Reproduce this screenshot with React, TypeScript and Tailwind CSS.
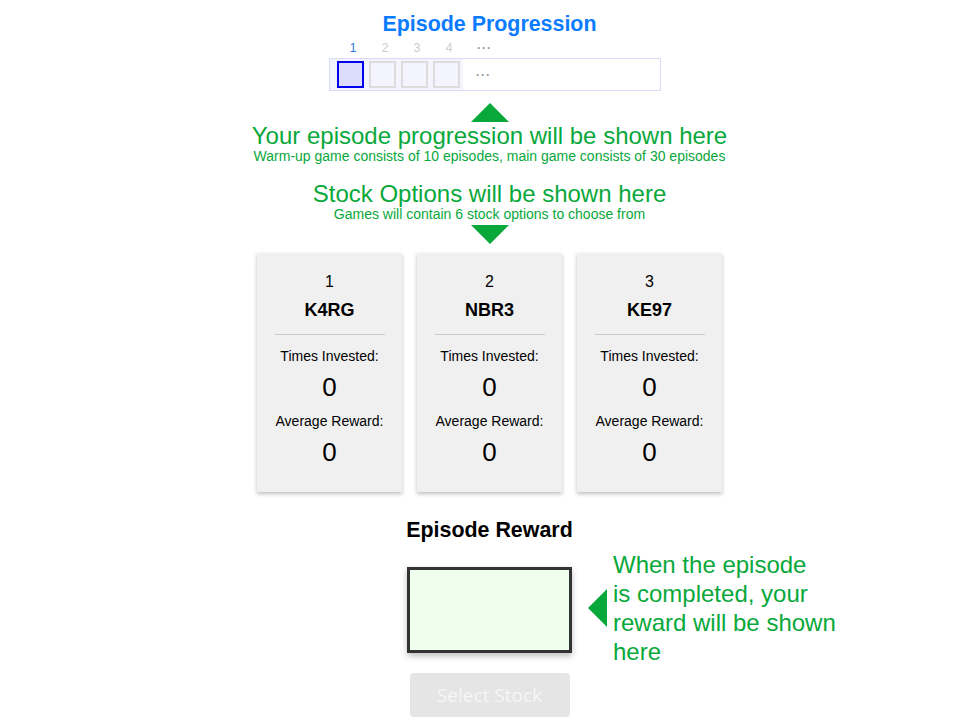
import React from 'react';

const stocks = [
  { id: 1, name: 'K4RG', invested: 0, reward: 0 },
  { id: 2, name: 'NBR3', invested: 0, reward: 0 },
  { id: 3, name: 'KE97', invested: 0, reward: 0 },
];

function TriangleUp() {
  return (
    <svg width="38" height="19" viewBox="0 0 38 19" className="block">
      <polygon points="19,0 38,19 0,19" fill="#09a83b" />
    </svg>
  );
}

function TriangleDown() {
  return (
    <svg width="38" height="19" viewBox="0 0 38 19" className="block">
      <polygon points="0,0 38,0 19,19" fill="#09a83b" />
    </svg>
  );
}

function TriangleLeft() {
  return (
    <svg width="19" height="38" viewBox="0 0 19 38" className="block shrink-0">
      <polygon points="19,0 19,38 0,19" fill="#09a83b" />
    </svg>
  );
}

function StockCard({ stock }: { stock: (typeof stocks)[number] }) {
  return (
    <div className="w-[145px] h-[239px] bg-[#f0f0f0] shadow-[0_2px_4px_rgba(0,0,0,0.25)] flex flex-col items-center pt-[19px] text-black">
      <div className="text-[16px] leading-[20px]">{stock.id}</div>
      <div className="mt-[7px] text-[18px] leading-[22px] font-bold">{stock.name}</div>
      <div className="mt-[13px] w-[110px] h-px bg-[#cccccc]" />
      <div className="mt-[12px] text-[14px] leading-[18px]">Times Invested:</div>
      <div className="mt-[7px] text-[26px] leading-[30px]">{stock.invested}</div>
      <div className="mt-[10px] text-[14px] leading-[18px]">Average Reward:</div>
      <div className="mt-[7px] text-[26px] leading-[30px]">{stock.reward}</div>
    </div>
  );
}

export default function App() {
  const boxes = [1, 2, 3, 4];

  return (
    <div className="min-h-screen bg-white font-['Liberation_Sans',Arial,sans-serif] pl-[5px]">
      <div className="flex flex-col items-center pt-[12px]">
        {/* Episode progression */}
        <h1 className="text-[21.4px] leading-[24px] font-bold text-[#0b7bff]">Episode Progression</h1>

        <div className="ml-[11px] w-[332px] mt-[5px]">
          <div className="flex items-center h-[14px] pl-[8px] text-[12px] leading-[14px]">
            {boxes.map((n) => (
              <div
                key={n}
                className={`w-[32px] text-center ${n === 1 ? 'text-[#2a7ae2]' : 'text-[#cccccc]'}`}
              >
                {n}
              </div>
            ))}
            <div className="ml-[12px] text-[#999999] tracking-[1px] font-bold">···</div>
          </div>
          <div className="mt-[3px] h-[33px] border border-[#dadaf8] flex items-stretch">
            <div className="bg-[#f4f4ff] flex items-center gap-[5px] pl-[7px] pr-[3px]">
              {boxes.map((n) => (
                <div
                  key={n}
                  className={`w-[27px] h-[27px] border-2 ${
                    n === 1 ? 'border-[#0000ee] bg-[#dcdcff]' : 'border-[#dcdcdc] bg-[#f4f4ff]'
                  }`}
                />
              ))}
            </div>
            <div className="flex items-center ml-[13px] text-[12px] text-[#999999] tracking-[1px] font-bold">···</div>
          </div>
        </div>

        {/* Annotation: progression */}
        <div className="mt-[12px]">
          <TriangleUp />
        </div>
        <div className="text-[24px] leading-[27px] text-[#09a83b] whitespace-nowrap">
          Your episode progression will be shown here
        </div>
        <div className="text-[14px] leading-[15px] text-[#09a83b] whitespace-nowrap">
          Warm-up game consists of 10 episodes, main game consists of 30 episodes
        </div>

        {/* Annotation: stock options */}
        <div className="mt-[16px] text-[24px] leading-[27px] text-[#09a83b] whitespace-nowrap">
          Stock Options will be shown here
        </div>
        <div className="text-[14px] leading-[15px] text-[#09a83b] whitespace-nowrap">
          Games will contain 6 stock options to choose from
        </div>
        <div className="mt-[3px]">
          <TriangleDown />
        </div>

        {/* Stock cards */}
        <div className="mt-[9px] flex gap-[15px]">
          {stocks.map((s) => (
            <StockCard key={s.id} stock={s} />
          ))}
        </div>

        {/* Episode reward */}
        <h2 className="mt-[26px] text-[21.4px] leading-[24px] font-bold text-black">Episode Reward</h2>
        <div className="relative mt-[25px] w-[165px] h-[86px] border-[3px] border-[#333333] bg-[#eeffee] shadow-[0_3px_6px_rgba(0,0,0,0.25)]">
          <div className="absolute left-[178px] top-[-20px] h-[116px] flex items-center gap-[6px]">
            <TriangleLeft />
            <div className="text-[24px] leading-[29px] text-[#09a83b] whitespace-nowrap">
              When the episode
              <br />
              is completed, your
              <br />
              reward will be shown
              <br />
              here
            </div>
          </div>
        </div>

        <button
          disabled
          className="mt-[20px] w-[160px] h-[44px] rounded-[4px] bg-[#e5e5e5] text-[#f6f6f6] text-[19px] font-['Open_Sans',sans-serif]"
        >
          Select Stock
        </button>
      </div>
    </div>
  );
}
